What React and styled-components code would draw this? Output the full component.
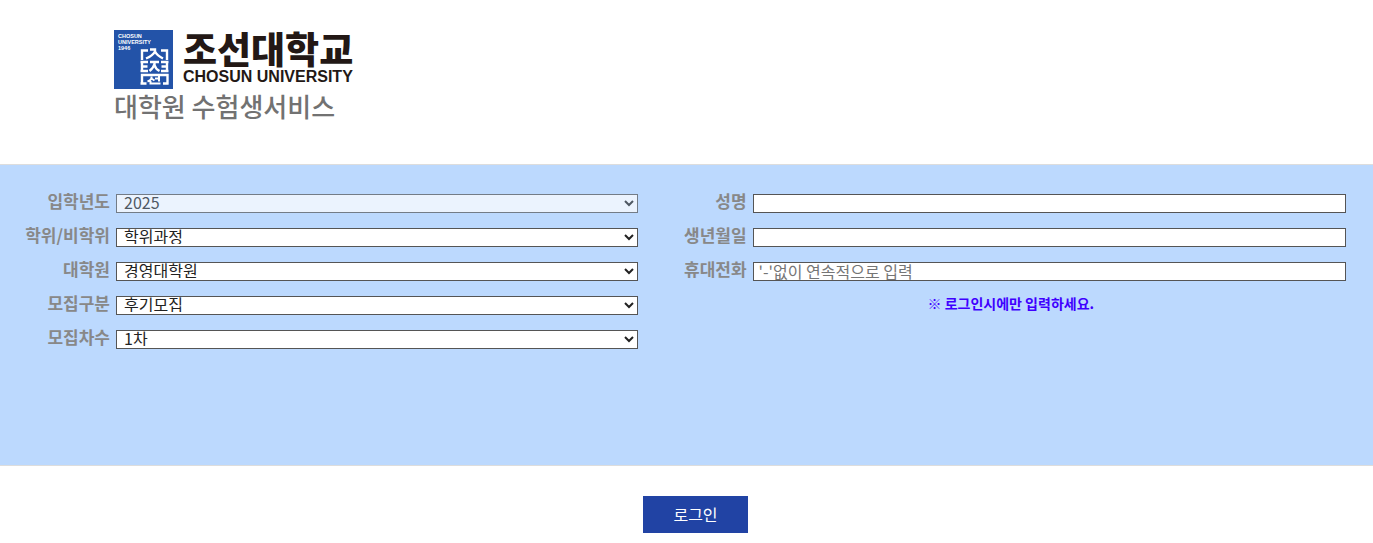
import React from 'react';
import styled, { createGlobalStyle } from 'styled-components';

const selects = [
  { id: 'year', label: '입학년도', options: ['2025'], disabled: true },
  { id: 'degree', label: '학위/비학위', options: ['학위과정', '비학위과정'] },
  { id: 'school', label: '대학원', options: ['경영대학원', '교육대학원'] },
  { id: 'term', label: '모집구분', options: ['후기모집', '전기모집'] },
  { id: 'round', label: '모집차수', options: ['1차', '2차'] },
];

const inputs = [
  { id: 'name', label: '성명' },
  { id: 'birth', label: '생년월일' },
  { id: 'phone', label: '휴대전화', placeholder: "'-'없이 연속적으로 입력" },
];

const Emblem = () => (
  <svg width="59" height="59" viewBox="0 0 59 59" aria-hidden="true">
    <rect width="59" height="59" fill="#2353a8" />
    <svg width="59" height="59" viewBox="0 0 118 118">
      <g fill="#fff" fontFamily="'Liberation Sans', Arial, sans-serif" fontWeight="700" fontSize="11">
        <text x="8" y="16">CHOSUN</text>
        <text x="8" y="28">UNIVERSITY</text>
        <text x="8" y="40">1946</text>
      </g>
    </svg>
    <g fill="none" stroke="#fff" strokeWidth="2.4">
      <path d="M34 20.5H28V30M47 20.5h6V30" />
      <path d="M36 19.5h5v2q-2 4-9 7M41 21.5q2 4 8 7" />
      <path d="M26.5 32h7.500M28 32v9M28 36.500h5.500M26.500 41h7.500" />
      <path d="M36 32h9M40.500 32v2q-1 4-5 7M40.500 35q1 4 5 6" />
      <path d="M47 32h7.500M53 32v9M47.500 36.500h6M47 41h7.500" />
      <path d="M28 54.500V45h25.500V54.500M26.500 53.500h6M49 53.500h5.500" />
      <path d="M37.500 46.500v2q-1 2-4 3M37.500 48.500l3 2M41 48.500h4M45 46v5.500M36.500 51v2.500h10" strokeWidth="2" />
    </g>
  </svg>
);

const App = () => (
  <>
    <GlobalStyle />
    <Header>
      <Brand>
        <Emblem />
        <BrandText>
          <KoreanName>조선대학교</KoreanName>
          <EnglishName>CHOSUN UNIVERSITY</EnglishName>
        </BrandText>
      </Brand>
      <Service>대학원 수험생서비스</Service>
    </Header>
    <form onSubmit={(e) => e.preventDefault()}>
      <Band>
        <Column $labelWidth="110px">
          {selects.map(({ id, label, options, disabled }) => (
            <Row key={id}>
              <Label htmlFor={id}>{label}</Label>
              <SelectBox $disabled={disabled}>
                <Select id={id} disabled={disabled}>
                  {options.map((o) => <option key={o}>{o}</option>)}
                </Select>
                <Arrow viewBox="0 0 10 7" aria-hidden="true">
                  <path d="M1 1l4 4 4-4" fill="none" stroke="#222" strokeWidth="2" />
                </Arrow>
              </SelectBox>
            </Row>
          ))}
        </Column>
        <Column $labelWidth="109px">
          {inputs.map(({ id, label, placeholder }) => (
            <Row key={id}>
              <Label htmlFor={id}>{label}</Label>
              <Input id={id} type="text" placeholder={placeholder} />
            </Row>
          ))}
          <Notice>※ 로그인시에만 입력하세요.</Notice>
        </Column>
      </Band>
      <Footer>
        <LoginButton type="submit">로그인</LoginButton>
      </Footer>
    </form>
  </>
);

export default App;

const GlobalStyle = createGlobalStyle`
  * {
    box-sizing: border-box;
  }

  body {
    margin: 0;
    background: #fff;
    font-family: 'Noto Sans CJK KR', sans-serif;
    font-size: 16px;
  }
`

const Header = styled.header`
  padding: 30px 20px 42px 114px;
`

const Brand = styled.div`
  display: flex;
  gap: 10px;

  svg {
    flex: none;
  }
`

const BrandText = styled.div`
  display: flex;
  flex-direction: column;
  color: #231815;
  white-space: nowrap;
`

const KoreanName = styled.span`
  font-size: 37px;
  font-weight: 900;
  line-height: 36px;
`

const EnglishName = styled.span`
  font-family: 'Liberation Sans', Arial, sans-serif;
  font-size: 16px;
  font-weight: 700;
  line-height: 22px;
`

const Service = styled.h1`
  margin: 0;
  color: #727272;
  font-size: 26px;
  font-weight: 500;
  line-height: 33px;
`

const Band = styled.div`
  display: grid;
  grid-template-columns: 9fr 10fr;
  min-height: 302px;
  padding: 29px 27px 0 0;
  background: #bcd9fe;
  border-top: 1px solid #ddd;
  border-bottom: 1px solid #ddd;
`

const Column = styled.div`
  display: grid;
  grid-template-columns: ${(props) => props.$labelWidth} 1fr;
  grid-auto-rows: 19px;
  align-content: start;
  gap: 15px 6px;
`

const Row = styled.div`
  display: contents;
`

const Label = styled.label`
  color: #888;
  font-size: 17px;
  font-weight: 700;
  line-height: 14px;
  text-align: right;
  white-space: nowrap;
`

const SelectBox = styled.div`
  position: relative;
  opacity: ${(props) => (props.$disabled ? 0.7 : 1)};
`

const Select = styled.select`
  appearance: none;
  display: block;
  width: 100%;
  height: 19px;
  padding: 0 20px 2px 7px;
  border: 1px solid #555;
  border-radius: 0;
  background: #fff;
  color: #222;
  font-family: inherit;
  font-size: 16px;
  font-weight: 400;
  line-height: 15px;

  &:disabled {
    opacity: 1;
  }
`

const Arrow = styled.svg`
  position: absolute;
  top: 6px;
  right: 4px;
  width: 10px;
  height: 7px;
  pointer-events: none;
`

const Input = styled.input`
  width: 100%;
  height: 19px;
  padding: 0 5px 2px;
  border: 1px solid #555;
  background: #fff;
  color: #222;
  font-family: inherit;
  font-size: 16px;
  font-weight: 400;
  line-height: 16px;

  &::placeholder {
    color: #757575;
  }
`

const Notice = styled.p`
  grid-column: 1 / -1;
  margin: 0;
  padding-left: 38px;
  color: #3f00ff;
  font-size: 14px;
  font-weight: 700;
  line-height: 14px;
  text-align: center;
`

const Footer = styled.div`
  display: flex;
  justify-content: center;
  padding: 30px 0 10px 18px;
`

const LoginButton = styled.button`
  width: 105px;
  height: 37px;
  padding: 0 0 2px;
  border: none;
  background: #2143a4;
  color: #fff;
  font-family: inherit;
  font-size: 16px;
  font-weight: 400;
  cursor: pointer;
`
